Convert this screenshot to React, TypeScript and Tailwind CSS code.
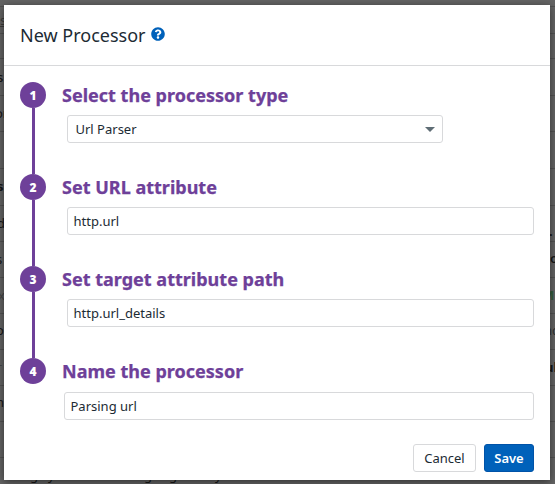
import React from "react";

type BackgroundRow = {
  height: string;
  left?: string;
  leftClass?: string;
  right?: string;
  rightClass?: string;
};

const backgroundRows: BackgroundRow[] = [
  { height: "h-[7px]" },
  { height: "h-[27px]", left: "s", leftClass: "text-[#3b3b3a] underline pt-[4px]" },
  { height: "h-[25px]" },
  { height: "h-[37px]", left: "s", leftClass: "font-medium -ml-[3px] pt-[9px]" },
  { height: "h-[36px]", left: "on", leftClass: "-ml-[5px] pt-[8px]" },
  { height: "h-[37px]" },
  { height: "h-[37px]", left: "s", leftClass: "font-bold -ml-[3px] pt-[8px]" },
  { height: "h-[36px]", left: "d", leftClass: "-ml-[3px] pt-[8px]", right: ".", rightClass: "pt-[16px] -ml-[1px] font-bold" },
  { height: "h-[36px]", left: "s", leftClass: "-ml-[4px] pt-[8px]", right: "o", rightClass: "pt-[7px] font-semibold" },
  { height: "h-[36px]", left: "x", leftClass: "text-[#454544] -ml-[2px] pt-[8px]", right: "M", rightClass: "text-[#315b3c] font-bold -ml-[8px] pt-[8px]" },
  { height: "h-[36px]", left: "o", leftClass: "-ml-[4px] pt-[7px]", right: "nd", rightClass: "text-[#303334] -ml-[6px] pt-[7px]" },
  { height: "h-[36px]", left: "-", leftClass: "text-[#444] -ml-[2px] pt-[5px]", right: "ul", rightClass: "font-bold -ml-[5px] pt-[8px]" },
  { height: "h-[36px]", left: "h", leftClass: "-ml-[4px] pt-[7px]" },
  { height: "h-[36px]" },
];

function Background() {
  return (
    <div aria-hidden="true" className="h-full w-full overflow-hidden bg-[#646464] text-[13px] leading-[18px] text-[#151617]">
      {backgroundRows.map((row, index) => (
        <div key={index} className={`${row.height} flex justify-between overflow-hidden border-b border-[#525252]`}>
          <div className="w-3 overflow-hidden">
            {row.left && <div className={`w-5 ${row.leftClass}`}>{row.left}</div>}
          </div>
          <div className="w-[5px] overflow-hidden">
            {row.right && <div className={`w-6 ${row.rightClass}`}>{row.right}</div>}
          </div>
        </div>
      ))}
      <div className="flex pl-[30px] pt-[8px]">
        <span className="w-[18px]">g</span>
        <span className="w-[96px]">y</span>
        <span className="w-[25px]">g</span>
        <span className="w-[46px]">g</span>
        <span>y</span>
      </div>
    </div>
  );
}

function HelpIcon() {
  return (
    <svg viewBox="0 0 512 512" className="ml-[5px] mt-[22px] h-[14px] w-[14px] fill-[#0061ba]">
      <path d="M504 256c0 136.997-111.043 248-248 248S8 392.997 8 256C8 119.083 119.043 8 256 8s248 111.083 248 248zM262.655 90c-54.497 0-89.255 22.957-116.549 63.758-3.536 5.286-2.353 12.415 2.715 16.258l34.699 26.31c5.205 3.947 12.621 3.008 16.665-2.122 17.864-22.658 30.113-35.797 57.303-35.797 20.429 0 45.698 13.148 45.698 32.958 0 14.976-12.363 22.667-32.534 33.976C247.128 238.528 216 254.941 216 296v4c0 6.627 5.373 12 12 12h56c6.627 0 12-5.373 12-12v-1.333c0-28.462 83.186-29.647 83.186-106.667 0-58.002-60.165-102-116.531-102zM256 338c-25.365 0-46 20.635-46 46 0 25.364 20.635 46 46 46s46-20.636 46-46c0-25.365-20.635-46-46-46z" />
    </svg>
  );
}

function Step({ number, title, last = false, children }: { number: number; title: string; last?: boolean; children: React.ReactNode }) {
  return (
    <li className={last ? "flex" : "flex h-[92px]"}>
      <div className="flex w-[26px] shrink-0 flex-col items-center">
        <span className="flex h-[26px] w-[26px] shrink-0 items-center justify-center rounded-full bg-[#6e4099] pt-px text-[12px] font-black leading-none text-white">
          {number}
        </span>
        {!last && <span className="ml-px w-[3px] flex-1 bg-[#6e4099]" />}
      </div>
      <div className="ml-4 flex-1">
        <h2 className="h-[26px] whitespace-nowrap text-[18px] font-bold leading-[26px] tracking-[0.01px] text-[#6e4099] [-webkit-text-stroke:0.25px_#6e4099]">{title}</h2>
        {children}
      </div>
    </li>
  );
}

const field = "flex h-7 items-center rounded-[3px] border border-[#d8d9db] bg-white pt-[2px] text-[13px] text-[#1c2b34]";

export default function App() {
  return (
    <main className="relative h-[484px] w-[555px] overflow-hidden font-['Noto_Sans',sans-serif]">
      <Background />
      <section
        role="dialog"
        className="absolute left-1 top-[5px] flex h-[475px] w-[546px] flex-col bg-white shadow-[0_2px_8px_rgba(0,0,0,0.5)]"
      >
        <header className="flex h-[61px] shrink-0 items-start border-b border-[#d8d9db] pl-4">
          <h1 className="mt-[17px] whitespace-nowrap text-[18px] leading-[26px] text-[#1c2b34]">New Processor</h1>
          <HelpIcon />
        </header>
        <ol className="px-4 pt-4">
          <Step number={1} title="Select the processor type">
            <div className={`${field} ml-[5px] mt-[7px] w-[376px] justify-between pl-[7.5px] pr-[7px]`}>
              Url Parser
              <svg viewBox="0 0 10 5" className="mb-[2px] h-[5px] w-[10px] fill-[#5f6d75]"><path d="M0 0H10L5 5Z" /></svg>
            </div>
          </Step>
          <Step number={2} title="Set URL attribute">
            <div className={`${field} ml-[5px] mt-[7px] pl-[5.5px]`}>http.url</div>
          </Step>
          <Step number={3} title="Set target attribute path">
            <div className={`${field} ml-[5px] mt-[7px] pl-[5.5px]`}>http.url_details</div>
          </Step>
          <Step number={4} title="Name the processor" last>
            <div className={`${field} ml-[2px] mt-[8px] pl-[5.5px]`}>Parsing url</div>
          </Step>
        </ol>
        <footer className="mt-auto flex justify-end gap-2 pb-2 pr-4">
          <button className={`${field} w-[63px] justify-center`}>Cancel</button>
          <button className="flex h-7 w-[50px] items-center justify-center rounded-[3px] border border-[#0053a8] bg-[#0061ba] pt-[2px] text-[13px] font-semibold text-white">Save</button>
        </footer>
      </section>
    </main>
  );
}
